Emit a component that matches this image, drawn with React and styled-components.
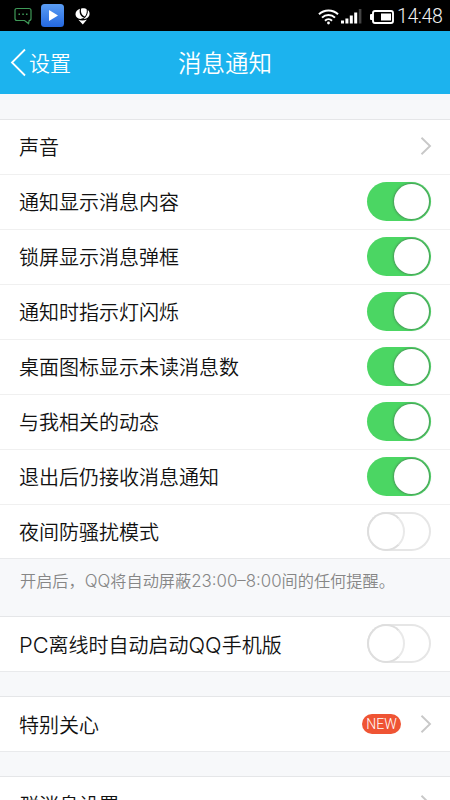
import React, { useState } from 'react';
import styled, { createGlobalStyle } from 'styled-components';

export default function App() {
	return (
		<StyledScreen>
			<GlobalStyle />
			<StatusBar />
			<StyledHeader>
				<StyledBack>
					<svg width="17" height="30" viewBox="0 0 17 30">
						<path d="M15 2.5L2 15.5L15 28.5" fill="none" stroke="#fff" strokeWidth="1.8" />
					</svg>
					<span>设置</span>
				</StyledBack>
				<StyledTitle>消息通知</StyledTitle>
			</StyledHeader>

			<StyledGap />
			<StyledGroup>
				<LinkRow label="声音" />
				<SwitchRow label="通知显示消息内容" on />
				<SwitchRow label="锁屏显示消息弹框" on />
				<SwitchRow label="通知时指示灯闪烁" on />
				<SwitchRow label="桌面图标显示未读消息数" on />
				<SwitchRow label="与我相关的动态" on />
				<SwitchRow label="退出后仍接收消息通知" on />
				<SwitchRow label="夜间防骚扰模式" />
			</StyledGroup>
			<StyledHint>
				开启后，<Latin>QQ</Latin>将自动屏蔽<Latin>23:00–8:00</Latin>间的任何提醒。
			</StyledHint>
			<StyledGroup>
				<SwitchRow label={<><Latin $wide>PC</Latin>离线时自动启动<Latin $wide>QQ</Latin>手机版</>} />
			</StyledGroup>
			<StyledGap />
			<StyledGroup>
				<LinkRow label="特别关心" badge="NEW" />
			</StyledGroup>
			<StyledGap />
			<StyledGroup>
				<LinkRow label="群消息设置" />
			</StyledGroup>
		</StyledScreen>
	);
}


/* ELEMENTS */
function StatusBar() {
	return (
		<StyledStatus>
			<StyledNotices>
				<svg width="18" height="18" viewBox="0 0 18 18" fill="none" stroke="#3f9a58" strokeWidth="1.2">
					<path d="M3 1.5H15Q17 1.5 17 3.5V11.5Q17 13.5 15.2 13.5L14.6 16.6L10.5 13.5H3Q1 13.5 1 11.5V3.5Q1 1.5 3 1.5Z" />
					<path d="M4.5 7.2H6M8.3 7.2H9.8M12 7.2H13.5" strokeWidth="1.6" />
				</svg>
				<svg width="23" height="23" viewBox="0 0 23 23">
					<defs>
						<linearGradient id="play" x1="0" y1="0" x2="0" y2="1">
							<stop offset="0" stopColor="#5b9df3" />
							<stop offset="1" stopColor="#2468e0" />
						</linearGradient>
					</defs>
					<rect width="23" height="23" rx="3.5" fill="url(#play)" />
					<path d="M8 6L17 11.5L8 17Z" fill="#fff" />
				</svg>
				<svg width="15" height="17" viewBox="0 0 15 17">
					<path d="M5 .8C2 1.8 .3 4 .5 6.6C.7 9 2.6 10.7 5.4 11L9.2 9.8C5.6 8.6 3.8 5 5 .8Z" fill="#fff" />
					<path d="M6.2 .6C8 0 10.4 .2 11.6 1.2C12.2 3.6 11.6 6.6 9.8 8.6C6.8 7.6 5.2 4.2 6.2 .6Z" fill="#fff" />
					<path d="M12.8 2C14.4 3.4 14.9 5.2 14.4 7.2C13.6 9.6 11.4 10.8 8.4 11C11.6 9 13.2 5.6 12.8 2Z" fill="#fff" />
					<path d="M3.4 11.8C6 12.8 9 12.8 12 11.4L7.8 16.6Z" fill="#fff" />
				</svg>
			</StyledNotices>
			<StyledSignals>
				<svg width="21" height="16" viewBox="0 0 21 16" fill="none" stroke="#fff" strokeWidth="2">
					<path d="M1 5.3C6.2 .1 14.8 .1 20 5.3" />
					<path d="M4 8.6C7.6 5 13.4 5 17 8.6" />
					<path d="M7 11.8C9 9.8 12 9.8 14 11.8" />
					<circle cx="10.5" cy="14" r="1.4" fill="#fff" stroke="none" />
				</svg>
				<svg width="21" height="15" viewBox="0 0 21 15" fill="#fff">
					<rect x="0" y="11.5" width="3" height="3" />
					<rect x="4.4" y="9.5" width="3" height="5" />
					<rect x="8.8" y="6.5" width="3" height="8" />
					<rect x="13.2" y="3.5" width="3" height="11" />
					<rect x="17.8" y="0" width="2.6" height="14.5" fill="#444" />
				</svg>
				<svg width="24" height="14" viewBox="0 0 24 14">
					<path d="M5 1H21Q23 1 23 3V11Q23 13 21 13H5Q3 13 3 11V3Q3 1 5 1Z" fill="none" stroke="#fff" strokeWidth="1.9" />
					<rect x="0" y="4" width="3" height="6" rx="1" fill="#fff" />
					<rect x="11" y="3.5" width="10" height="7" fill="#fff" />
				</svg>
				<StyledTime>14:48</StyledTime>
			</StyledSignals>
		</StyledStatus>
	);
}

function LinkRow({ label, badge }) {
	return (
		<StyledRow>
			<StyledLabel>{label}</StyledLabel>
			{badge && <StyledBadge>{badge}</StyledBadge>}
			<StyledArrow width="12" height="20" viewBox="0 0 12 20">
				<path d="M1.5 1.8L10 10L1.5 18.2" fill="none" stroke="#c8c8c8" strokeWidth="1.9" />
			</StyledArrow>
		</StyledRow>
	);
}

function SwitchRow({ label, on = false }) {
	const [checked, setChecked] = useState(on);

	return (
		<StyledRow>
			<StyledLabel>{label}</StyledLabel>
			<StyledSwitch
				role="switch"
				aria-checked={checked}
				$on={checked}
				onClick={() => setChecked(!checked)}
			>
				<StyledKnob $on={checked} />
			</StyledSwitch>
		</StyledRow>
	);
}
/* END ELEMENTS */

/* STYLES */
const GlobalStyle = createGlobalStyle`
	* {
		box-sizing: border-box;
	}

	body {
		margin: 0;
		overflow: hidden;
	}
`;

const StyledScreen = styled.div`
	width: 100%;
	height: 800px;
	display: flex;
	flex-direction: column;
	overflow: hidden;
	background-color: #f7f8fa;
	font-family: 'Noto Sans CJK SC', sans-serif;
	font-weight: 350;
	white-space: nowrap;

	& > * {
		flex-shrink: 0;
	}
`;

const StyledStatus = styled.div`
	height: 31px;
	padding: 0 7px 0 14px;
	display: flex;
	align-items: center;
	justify-content: space-between;
	background-color: #000;
`;

const StyledNotices = styled.div`
	display: flex;
	align-items: center;
	gap: 9px;

	svg:last-child {
		margin: 2px 0 0 2px;
	}
`;

const StyledSignals = styled.div`
	display: flex;
	align-items: center;
	padding-top: 2px;

	svg:nth-of-type(2) {
		margin-left: 2px;
	}

	svg:nth-of-type(3) {
		margin-left: 8px;
	}
`;

const StyledTime = styled.span`
	width: 46px;
	margin-left: 3px;
	font-family: Roboto, sans-serif;
	font-size: 19.5px;
	font-weight: 300;
	line-height: 22px;
	letter-spacing: -0.4px;
	color: #f2f2f2;
`;

const StyledHeader = styled.div`
	height: 63px;
	padding: 0 0 2px 10px;
	display: grid;
	grid-template-columns: 1fr auto 1fr;
	align-items: center;
	background-color: #1cb3ee;
	color: #fff;
`;

const StyledBack = styled.div`
	display: flex;
	align-items: center;
	gap: 2px;
	font-size: 21px;
	line-height: 30px;

	svg {
		margin-top: 1px;
	}
`;

const StyledTitle = styled.div`
	padding-right: 10px;
	font-size: 23.5px;
	line-height: 34px;
`;

const StyledGroup = styled.div`
	background-color: #fff;
	border-top: 1px solid #e5e6e8;
	border-bottom: 1px solid #e9eaec;
	margin-bottom: -1px;
`;

const StyledRow = styled.div`
	height: 55px;
	padding: 0 19px 2px;
	display: flex;
	align-items: center;

	& + & {
		border-top: 1px solid #f0f0f0;
	}

	&:first-child,
	&:last-child {
		height: 54px;
	}

	&:last-child {
		padding-bottom: 1px;
	}
`;

const StyledLabel = styled.div`
	flex: 1;
	padding-top: 2px;
	font-size: 20px;
	line-height: 30px;
	color: #111;
`;

const Latin = styled.span`
	font-family: Inter, sans-serif;
	font-size: ${props => props.$wide ? '1.09em' : '1.04em'};
	font-weight: 300;
	line-height: 1;
`;

const StyledArrow = styled.svg`
	margin-right: -1px;
`;

const StyledBadge = styled.span`
	width: 39px;
	height: 20px;
	margin-right: 19px;
	border-radius: 10px;
	background-color: #ef5434;
	font-family: Roboto, sans-serif;
	font-size: 14px;
	font-weight: 300;
	line-height: 21px;
	text-align: center;
	color: #fff;
`;

const StyledSwitch = styled.div`
	width: 64px;
	height: 39px;
	padding: ${props => props.$on ? '2px' : '0'};
	display: flex;
	justify-content: ${props => props.$on ? 'flex-end' : 'flex-start'};
	border-radius: 20px;
	background-color: ${props => props.$on ? '#4bd663' : '#fff'};
	box-shadow: ${props => props.$on ? 'none' : 'inset 0 0 0 2px #e6e6e6'};
`;

const StyledKnob = styled.div`
	width: ${props => props.$on ? '35px' : '38px'};
	height: ${props => props.$on ? '35px' : '39px'};
	border: ${props => props.$on ? 'none' : '2px solid #dedede'};
	border-right-color: #e9e9e9;
	border-radius: 50%;
	background-color: #fff;
	box-shadow: ${props => props.$on ? '0 0 2px 1px rgba(70, 110, 80, 0.6)' : 'none'};
`;

const StyledHint = styled.div`
	height: 58px;
	padding: 10px 20px 0;
	font-size: 16.2px;
	line-height: 24px;
	color: #868686;
`;

const StyledGap = styled.div`
	height: 25px;
`;
/* END STYLES */
